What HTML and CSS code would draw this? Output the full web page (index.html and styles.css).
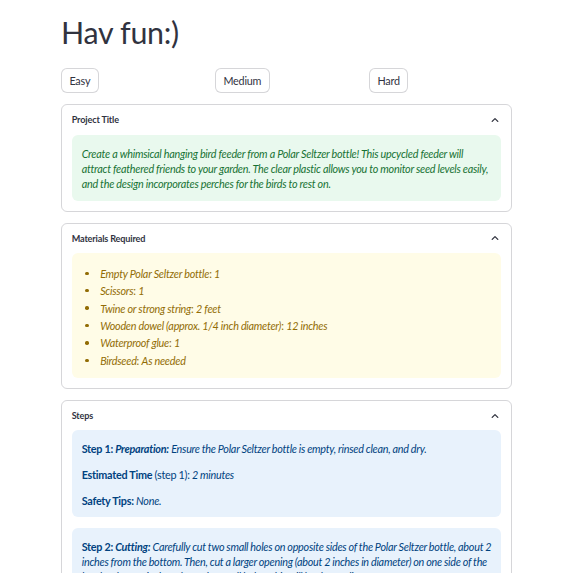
FILE: index.html
```html
<!DOCTYPE html>
<html lang="en">
<head>
<meta charset="utf-8">
<title>Hav fun:)</title>
<link rel="stylesheet" href="styles.css">
</head>
<body>
<main class="page">
  <h1 class="title">Hav fun:)</h1>

  <div class="buttons">
    <div class="col"><button class="btn">Easy</button></div>
    <div class="col"><button class="btn">Medium</button></div>
    <div class="col"><button class="btn">Hard</button></div>
  </div>

  <div class="expanders">
    <section class="expander">
      <div class="exp-head">
        <span class="exp-label">Project Title</span>
        <svg class="chev" viewBox="0 0 12 12" width="12" height="12" aria-hidden="true"><path d="M3.2 7.4 L6 4.6 L8.8 7.4" fill="none" stroke="#31333f" stroke-width="1.3" stroke-linecap="round" stroke-linejoin="round"/></svg>
      </div>
      <div class="exp-body">
        <div class="alert success">
          <p><em>Create a whimsical hanging bird feeder from a Polar Seltzer bottle! This upcycled feeder will attract feathered friends to your garden. The clear plastic allows you to monitor seed levels easily, and the design incorporates perches for the birds to rest on.</em></p>
        </div>
      </div>
    </section>

    <section class="expander">
      <div class="exp-head">
        <span class="exp-label">Materials Required</span>
        <svg class="chev" viewBox="0 0 12 12" width="12" height="12" aria-hidden="true"><path d="M3.2 7.4 L6 4.6 L8.8 7.4" fill="none" stroke="#31333f" stroke-width="1.3" stroke-linecap="round" stroke-linejoin="round"/></svg>
      </div>
      <div class="exp-body">
        <div class="alert warning">
          <ul class="materials">
            <li><span><em>Empty Polar Seltzer bottle</em>: <em>1</em></span></li>
            <li><span><em>Scissors</em>: <em>1</em></span></li>
            <li><span><em>Twine or strong string</em>: <em>2 feet</em></span></li>
            <li><span><em>Wooden dowel (approx. 1/4 inch diameter)</em>: <em>12 inches</em></span></li>
            <li><span><em>Waterproof glue</em>: <em>1</em></span></li>
            <li><span><em>Birdseed</em>: <em>As needed</em></span></li>
          </ul>
        </div>
      </div>
    </section>

    <section class="expander">
      <div class="exp-head">
        <span class="exp-label">Steps</span>
        <svg class="chev" viewBox="0 0 12 12" width="12" height="12" aria-hidden="true"><path d="M3.2 7.4 L6 4.6 L8.8 7.4" fill="none" stroke="#31333f" stroke-width="1.3" stroke-linecap="round" stroke-linejoin="round"/></svg>
      </div>
      <div class="exp-body">
        <div class="alert info">
          <p><strong>Step 1: <em>Preparation:</em></strong> <em>Ensure the Polar Seltzer bottle is empty, rinsed clean, and dry.</em></p>
          <p><strong>Estimated Time</strong> (step 1): <em>2 minutes</em></p>
          <p><strong>Safety Tips:</strong> <em>None.</em></p>
        </div>
        <div class="alert info">
          <p><strong>Step 2: <em>Cutting:</em></strong> <em>Carefully cut two small holes on opposite sides of the Polar Seltzer bottle, about 2 inches from the bottom. Then, cut a larger opening (about 2 inches in diameter) on one side of the bottle, about 3 inches above the small holes. This will be the feeding port.</em></p>
          <p><strong>Estimated Time</strong> (step 2): <em>5 minutes</em></p>
          <p><strong>Safety Tips:</strong> <em>Use caution when handling scissors.</em></p>
        </div>
      </div>
    </section>
  </div>
</main>
</body>
</html>
```
FILE: styles.css
```css
html, body {
  margin: 0;
  background: #ffffff;
}

body {
  font-family: Lato, "Liberation Sans", sans-serif;
  color: #31333f;
}

.page {
  width: 451px;
  margin-left: 61px;
  padding-top: 15.4px;
  padding-bottom: 40px;
}

.title {
  margin: 0;
  font-family: Lato, sans-serif;
  font-weight: 400;
  font-size: 30.4px;
  letter-spacing: -0.3px;
  line-height: 35.5px;
  color: #31333f;
}

.buttons {
  display: grid;
  grid-template-columns: repeat(3, 1fr);
  gap: 11px;
  margin-top: 17.4px;
}

.col {
  display: flex;
}

.btn {
  height: 24.4px;
  padding: 0 7.4px;
  border: 1px solid rgba(49, 51, 63, 0.2);
  border-radius: 6px;
  background: #ffffff;
  font-family: Lato, sans-serif;
  font-size: 10.8px;
  letter-spacing: -0.2px;
  color: #31333f;
}

.expanders {
  display: flex;
  flex-direction: column;
  gap: 10.7px;
  margin-top: 11.3px;
}

.expander {
  border: 1px solid rgba(49, 51, 63, 0.2);
  border-radius: 6px;
  padding: 0 9.7px 10.3px;
}

.exp-head {
  height: 29.7px;
  display: flex;
  align-items: center;
  justify-content: space-between;
}

.exp-label {
  font-weight: 700;
  font-size: 9.1px;
  letter-spacing: -0.15px;
  color: #31333f;
}

.chev {
  display: block;
}

.exp-body {
  display: flex;
  flex-direction: column;
  gap: 11px;
}

.alert {
  border-radius: 6px;
  padding: 10.5px 8.4px 9.5px 10px;
  font-size: 10.8px;
  letter-spacing: -0.25px;
  line-height: 15px;
}

.alert p {
  margin: 0;
}

.alert p + p {
  margin-top: 11px;
}

.success {
  background: #e9f9ee;
  color: #177233;
  padding-top: 11px;
  padding-bottom: 10px;
}

.warning {
  background: #fffce7;
  color: #926c05;
  padding-top: 12.5px;
  padding-bottom: 9.9px;
}

.info {
  background: #e8f2fc;
  color: #004280;
  padding-right: 3px;
  word-spacing: -0.2px;
}

.materials {
  list-style: none;
  margin: 0;
  padding: 0;
}

.materials li {
  display: flex;
  align-items: center;
}

.materials li + li {
  margin-top: 2.4px;
}

.materials li::before {
  content: "";
  flex: none;
  width: 3.4px;
  height: 3.4px;
  border-radius: 50%;
  background: currentColor;
  margin: 0 11.6px 0 3.5px;
}
```
